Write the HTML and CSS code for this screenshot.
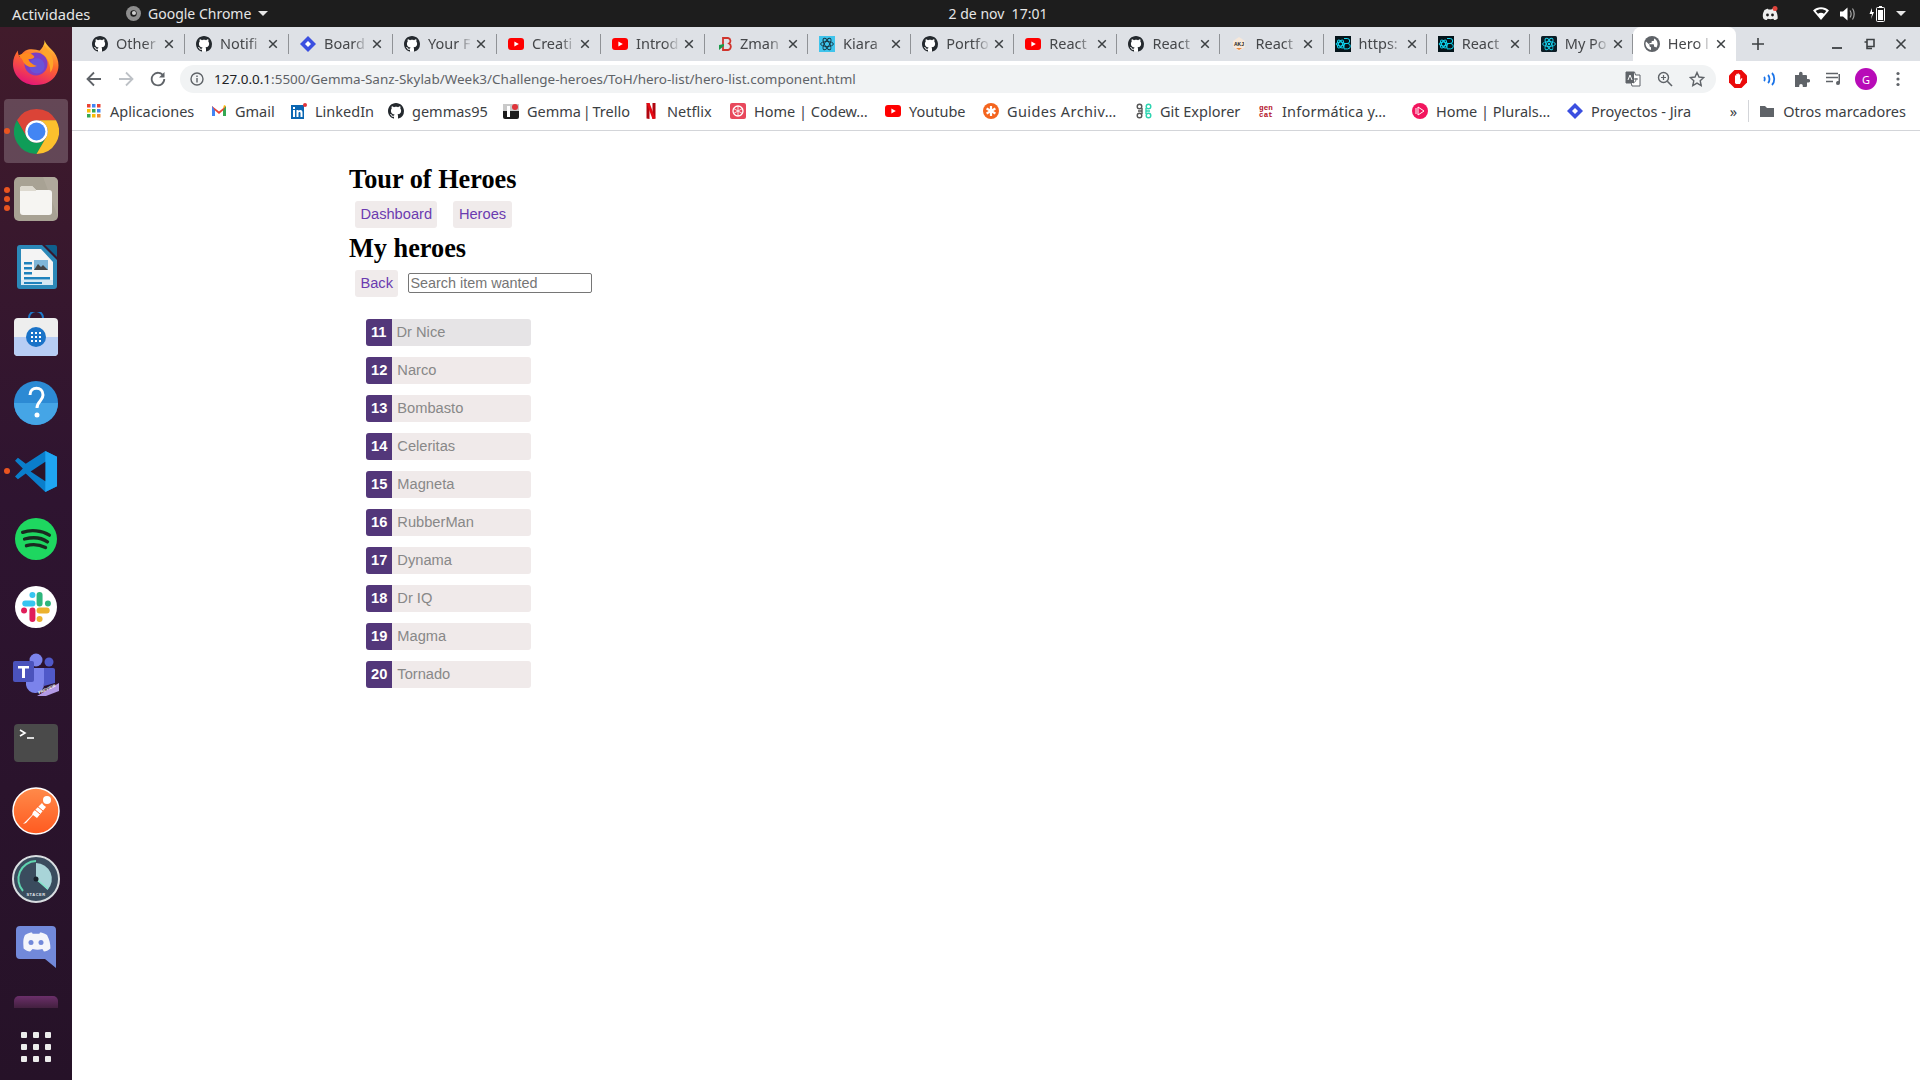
FILE: index.html
```html
<!DOCTYPE html>
<html lang="es">
<head>
    <meta charset="UTF-8">
    <title>Heroes</title>
    <link rel="stylesheet" href="styles.css">
</head>
<body>
    <svg class="defs" width="0" height="0">
        <symbol id="gh" viewBox="0 0 16 16"><circle cx="8" cy="8" r="7.6" fill="#fff"/><path fill="#24292e" d="M8 0C3.58 0 0 3.58 0 8c0 3.54 2.29 6.53 5.47 7.59.4.07.55-.17.55-.38 0-.19-.01-.82-.01-1.49-2.01.37-2.53-.49-2.69-.94-.09-.23-.48-.94-.82-1.13-.28-.15-.68-.52-.01-.53.63-.01 1.08.58 1.23.82.72 1.21 1.87.87 2.33.66.07-.52.28-.87.51-1.07-1.78-.2-3.64-.89-3.64-3.95 0-.87.31-1.59.82-2.15-.08-.2-.36-1.02.08-2.12 0 0 .67-.21 2.2.82.64-.18 1.32-.27 2-.27.68 0 1.36.09 2 .27 1.53-1.04 2.2-.82 2.2-.82.44 1.1.16 1.92.08 2.12.51.56.82 1.27.82 2.15 0 3.07-1.87 3.75-3.65 3.95.29.25.54.73.54 1.48 0 1.07-.01 1.93-.01 2.2 0 .21.15.46.55.38A8.013 8.013 0 0016 8c0-4.42-3.58-8-8-8z"/></symbol>
        <symbol id="yt" viewBox="0 0 16 16"><rect y="2" width="16" height="12" rx="3" fill="#f00"/><path d="M6.4 5.4L10.8 8l-4.4 2.6z" fill="#fff"/></symbol>
        <symbol id="jira" viewBox="0 0 16 16"><path d="M8 0l8 8-8 8-8-8z" fill="#3b4fe0"/><path d="M8 5l3 3-3 3-3-3z" fill="#fff"/></symbol>
        <symbol id="react" viewBox="0 0 16 16"><rect width="16" height="16" rx="1.5" fill="#0b1d26"/><g fill="none" stroke="#17d3ee" stroke-width=".9"><ellipse cx="8" cy="8" rx="6.4" ry="2.5"/><ellipse cx="8" cy="8" rx="6.4" ry="2.5" transform="rotate(60 8 8)"/><ellipse cx="8" cy="8" rx="6.4" ry="2.5" transform="rotate(120 8 8)"/></g><circle cx="8" cy="8" r="1.2" fill="#17d3ee"/></symbol>
        <symbol id="codeb" viewBox="0 0 16 16"><rect width="16" height="16" fill="#04141a"/><g fill="none" stroke="#10d5f0" stroke-width="1"><ellipse cx="5.5" cy="8" rx="4.5" ry="2"/><ellipse cx="5.5" cy="8" rx="4.5" ry="2" transform="rotate(60 5.5 8)"/><ellipse cx="5.5" cy="8" rx="4.5" ry="2" transform="rotate(120 5.5 8)"/><path d="M9 2.5h3.2a2.3 2.3 0 010 5H9m0 0h3.6a2.7 2.7 0 010 5.4H9z"/></g></symbol>
        <symbol id="globe" viewBox="0 0 16 16"><circle cx="8" cy="8" r="8" fill="#5f6368"/><path fill="#fff" d="M2 5.5l3.5 3.2v1.1c0 .8.7 1.4 1.5 1.4v2.9C4 13.400 1.700 11 1.500 8c0-.9.2-1.700.5-2.500zm8-3c2 .7 3.500 2.600 3.500 5.500 0 1.400-.5 2.700-1.400 3.700-.2-.6-.8-1-1.400-1H10V9c0-.4-.3-.7-.7-.7H5.500V7H7c.4 0 .7-.3.7-.7V5h1.500c.5 0 .8-.4.8-.8z"/></symbol>
        <symbol id="close" viewBox="0 0 10 10"><path d="M1.200 1.200l7.600 7.600M8.800 1.200L1.200 8.800" stroke="#3c4043" stroke-width="1.500" fill="none"/></symbol>
    </svg>

    <div class="topbar">
        <span class="top-activities">Actividades</span>
        <span class="top-app">
            <svg width="15" height="15" viewBox="0 0 16 16"><circle cx="8" cy="8" r="8" fill="#8e8e8e"/><circle cx="8" cy="8" r="3.400" fill="#1d1d1d"/><circle cx="8.500" cy="7.500" r="2.200" fill="#cfcfcf"/></svg>
            Google Chrome
            <i class="caret"></i>
        </span>
        <span class="top-clock">2 de nov&nbsp; 17:01</span>
        <span class="top-tray">
            <svg class="tray-discord" width="18" height="16" viewBox="0 0 18 16"><path fill="#eee" d="M3.500 4C5 3 6.500 2.700 7 2.700l.4.800h3.200l.4-.8c.5 0 2 .3 3.500 1.300 1.500 2.500 2.300 5.500 2.200 8.500-1 1-2.500 1.500-3.500 1.600l-.9-1.400c-2 .6-3.600.6-5.600 0l-.9 1.400c-1-.1-2.500-.6-3.500-1.600C1.200 9.500 2 6.500 3.500 4z"/><circle cx="6.500" cy="9" r="1.400" fill="#1d1d1d"/><circle cx="11.500" cy="9" r="1.400" fill="#1d1d1d"/><circle cx="14" cy="2.500" r="2.500" fill="#e0433b"/></svg>
            <svg class="tray-wifi" width="16" height="14" viewBox="0 0 16 14"><path d="M0 3.500C4.500-.7 11.500-.7 16 3.500L8 13z" fill="#fff"/><path d="M2.700 4C5.700 1.700 10.300 1.700 13.300 4L11 6.700C9.200 5.400 6.800 5.400 5 6.700z" fill="#1d1d1d"/></svg>
            <svg class="tray-sound" width="16" height="14" viewBox="0 0 16 14"><path d="M0 4.500h3L7.500.5v13L3 9.500H0z" fill="#fff"/><path d="M10 3.500c1.300 2 1.300 5 0 7M12.500 1.500c2.200 3 2.200 8 0 11" fill="none" stroke="#aaa" stroke-width="1.200"/></svg>
            <svg class="tray-battery" width="18" height="18" viewBox="0 0 18 18"><path d="M3 3L0.500 9H3l-1 5 3-7H3z" fill="#fff"/><rect x="7.500" y="2.500" width="8" height="14" rx="1" fill="none" stroke="#fff"/><rect x="10" y="1" width="3" height="1.500" fill="#fff"/><rect x="9" y="5" width="5" height="10" fill="#fff"/></svg>
            <i class="caret"></i>
        </span>
    </div>

    <div class="desktop">
        <nav class="dock">
            <div class="dock-item">
                <svg width="46" height="46" viewBox="0 0 48 48">
                    <defs>
                        <linearGradient id="ffx" x1="0.700" y1="0" x2="0.300" y2="1"><stop offset="0" stop-color="#ffd23a"/><stop offset=".45" stop-color="#ff6a2b"/><stop offset="1" stop-color="#e3127a"/></linearGradient>
                    </defs>
                    <path fill="url(#ffx)" d="M33 0c1 5 6 8 10 13 5 7 6 16 2 23-4 7-11 11-21 11C10 47 0 37 0 25c0-5 2-10 5-14 0 3 1 5 2 7 2-4 5-7 9-8 6-1 9 1 12 1 3-3 5-6 5-11z"/>
                    <circle cx="24" cy="25" r="12" fill="#7c3fc4"/>
                    <circle cx="25" cy="27" r="8" fill="#6a53d8"/>
                    <path fill="#ff8a1f" d="M6 16c5-3 12-4 16 1 1 2-3 3-6 3 1 3 5 6 9 7-6 3-13 0-15-6-1-2-3-3-4-5z"/>
                    <path fill="#ffa52a" d="M32 5c4 5 10 10 10 19 0 4-1 7-3 10 0-8-2-16-9-20 2-3 2-6 2-9z"/>
                </svg>
            </div>
            <div class="dock-item is-active">
                <i class="dots"><b></b></i>
                <svg width="45" height="45" viewBox="0 0 48 48">
                    <path fill="#db4437" d="M24 0A24 24 0 0 0 3.200 12L13.600 30A12 12 0 0 1 24 12H44.800A24 24 0 0 0 24 0z"/>
                    <path fill="#0f9d58" d="M3.200 12A24 24 0 0 0 24 48L34.400 30A12 12 0 0 1 13.600 30z"/>
                    <path fill="#fbc02d" d="M44.800 12H24A12 12 0 0 1 34.400 30L24 48A24 24 0 0 0 44.800 12z"/>
                    <circle cx="24" cy="24" r="12" fill="#fff"/>
                    <circle cx="24" cy="24" r="9.500" fill="#4285f4"/>
                </svg>
            </div>
            <div class="dock-item">
                <i class="dots"><b></b><b></b><b></b></i>
                <svg width="44" height="44" viewBox="0 0 44 44">
                    <rect width="44" height="44" rx="5" fill="#a8a294"/>
                    <path d="M29 0h10a5 5 0 015 5v35z" fill="#b3ad9f" opacity=".7"/>
                    <path d="M6 12a3 3 0 013-3h9l4 4h13a3 3 0 013 3v19a3 3 0 01-3 3H9a3 3 0 01-3-3z" fill="#f6f5f2"/>
                    <path d="M6 14V12a3 3 0 013-3h9l4 4v1z" fill="#ddd9cf"/>
                </svg>
            </div>
            <div class="dock-item">
                <svg width="44" height="46" viewBox="0 0 44 46">
                    <path d="M6 1h22l15 15v26a3 3 0 01-3 3H6a3 3 0 01-3-3V4a3 3 0 013-3z" fill="#2b88b8"/>
                    <path d="M31 1h10a2 2 0 012 2v10z" fill="#0f5f8c"/>
                    <path d="M7 5h20l12 13v23H7z" fill="#f4f4f4"/>
                    <path d="M7 36h32v5H7z" fill="#bfe0f2" opacity=".6"/>
                    <path d="M10 18h8v2.500h-8zm0 5h8v2.500h-8zm0 5h8v2.500h-8zm0 5h26v2.500H10zm0 5h18v2h-18z" fill="#1f82bd"/>
                    <rect x="20" y="16" width="14" height="10" fill="#7fb6d8"/>
                    <path d="M20 26l4-6 3 3 2-2 5 5z" fill="#444"/>
                </svg>
            </div>
            <div class="dock-item">
                <svg width="44" height="46" viewBox="0 0 44 46">
                    <path d="M15 9V6a7 7 0 0114 0v3" fill="none" stroke="#1d79c9" stroke-width="2"/>
                    <rect y="6" width="44" height="38" rx="4" fill="#eeeeee"/>
                    <path d="M0 25h44v15a4 4 0 01-4 4H4a4 4 0 01-4-4z" fill="#b7cdf4"/>
                    <circle cx="22" cy="25" r="10" fill="#1a73c8"/>
                    <path d="M17 20h2v2h-2zm4 0h2v2h-2zm4 0h2v2h-2zm-8 4h2v2h-2zm4 0h2v2h-2zm4 0h2v2h-2zm-8 4h2v2h-2zm4 0h2v2h-2zm4 0h2v2h-2z" fill="#fff"/>
                </svg>
            </div>
            <div class="dock-item">
                <svg width="44" height="44" viewBox="0 0 44 44">
                    <circle cx="22" cy="22" r="22" fill="#2c8ad4"/>
                    <path d="M0 22h44a22 22 0 01-44 0z" fill="#45a5e6"/>
                    <path d="M16 14c0-9 13-9 13 0 0 6-6 6-6 13" fill="none" stroke="#fff" stroke-width="3"/>
                    <circle cx="23" cy="34" r="2.500" fill="#fff"/>
                </svg>
            </div>
            <div class="dock-item">
                <i class="dots"><b></b></i>
                <svg width="43" height="43" viewBox="0 0 44 44">
                    <path d="M31 1l12 6v30l-12 6-20-19-8 6-3-3 8-8-8-8 3-3 8 6z" fill="#0a7ecb"/>
                    <path d="M31 1l12 6v30l-12 6z" fill="#1fa5f2"/>
                    <path d="M31 12L16 22l15 10z" fill="#2c1428"/>
                </svg>
            </div>
            <div class="dock-item">
                <svg width="42" height="42" viewBox="0 0 44 44">
                    <circle cx="22" cy="22" r="22" fill="#1ed760"/>
                    <path d="M8 15c9-3 20-2 28 3M10 22c8-2 17-2 24 3M12 29c7-2 14-1 20 2" fill="none" stroke="#1a2a20" stroke-width="3.500" stroke-linecap="round"/>
                </svg>
            </div>
            <div class="dock-item">
                <svg width="42" height="42" viewBox="0 0 44 44">
                    <circle cx="22" cy="22" r="22" fill="#fff"/>
                    <g fill="none" stroke-width="5" stroke-linecap="round" transform="translate(-5.500 -5.500) scale(1.250)">
                        <path d="M13 19h6" stroke="#36c5f0"/><path d="M19 12v0" stroke="#36c5f0"/>
                        <path d="M25 12v7" stroke="#2eb67d"/><path d="M32 19v0" stroke="#2eb67d"/>
                        <path d="M25 25h6" stroke="#ecb22e"/><path d="M25 32v0" stroke="#ecb22e"/>
                        <path d="M19 25v7" stroke="#e01e5a"/><path d="M12 25v0" stroke="#e01e5a"/>
                    </g>
                </svg>
            </div>
            <div class="dock-item">
                <svg width="46" height="44" viewBox="0 0 46 44">
                    <circle cx="23" cy="7" r="6.500" fill="#7b83eb"/>
                    <circle cx="36" cy="9" r="4.500" fill="#5059c9"/>
                    <path d="M31 15h9a2 2 0 012 2v13l-11 3z" fill="#5059c9"/>
                    <path d="M13 15h18v15a9 9 0 01-18 2z" fill="#7b83eb"/>
                    <rect y="8" width="21" height="21" rx="2" fill="#4b53bc"/>
                    <path d="M5 13h11v2.500h-4V25H9v-9.500H5z" fill="#fff"/>
                    <path d="M46 30v8L33 43H24z" fill="#b39ae6"/>
                    <text x="26" y="41" transform="rotate(-24 26 41)" class="dock-tiny">PREVIEW</text>
                </svg>
            </div>
            <div class="dock-item">
                <svg width="44" height="38" viewBox="0 0 44 38">
                    <rect width="44" height="38" rx="4" fill="#4a4a4a"/>
                    <path d="M6 6l5 3-5 3" fill="none" stroke="#fff" stroke-width="1.600"/>
                    <path d="M13 14h7" stroke="#fff" stroke-width="1.600"/>
                </svg>
            </div>
            <div class="dock-item">
                <svg width="48" height="48" viewBox="0 0 48 48">
                    <defs><linearGradient id="pm" x1="0" y1="0" x2="0" y2="1"><stop offset="0" stop-color="#ff8a4a"/><stop offset="1" stop-color="#ff5a20"/></linearGradient></defs>
                    <circle cx="24" cy="24" r="23" fill="url(#pm)" stroke="#fff" stroke-width="1.500"/>
                    <path d="M11 37l3-1 7-8 4 3 9-11c-1-1-3-2-4-4l-9 9-1 3-9 9z" fill="#fff"/>
                    <path d="M22 22l6 5M25 19l6 5" stroke="#ff6a30" stroke-width="1"/>
                    <circle cx="35" cy="13" r="4" fill="#fff"/>
                </svg>
            </div>
            <div class="dock-item">
                <svg width="48" height="48" viewBox="0 0 48 48">
                    <circle cx="24" cy="24" r="23" fill="#3a4c5e" stroke="#d8dde0" stroke-width="2"/>
                    <path d="M24 8a16 16 0 0111.500 27L24 24z" fill="#a8d4d8"/>
                    <path d="M11 36A18 18 0 0 1 24 6" fill="none" stroke="#5fd4b0" stroke-width="2"/>
                    <path d="M24 24l12 10" stroke="#7fe6c8" stroke-width="1.500"/>
                    <circle cx="24" cy="24" r="2.500" fill="#17202a"/>
                    <text x="24" y="41" class="dock-tiny dock-tiny-mid">STACER</text>
                </svg>
            </div>
            <div class="dock-item">
                <svg width="40" height="42" viewBox="0 0 40 42">
                    <path d="M4 0h32a4 4 0 014 4v38l-11-9H4a4 4 0 01-4-4V4a4 4 0 014-4z" fill="#7289da"/>
                    <path d="M9 9c3-2 6-2.500 7-2.500l.6 1.200h6.800l.6-1.200c1 0 4 .5 7 2.500 2.500 4.500 3.500 9 3.400 13.500-2 2-4.500 3-6.500 3l-1.500-2.500c-3.500 1-6.300 1-9.800 0L14.100 25.500c-2 0-4.500-1-6.500-3C7.500 18 6.500 13.500 9 9z" fill="#f4f5fb"/>
                    <circle cx="15" cy="16.500" r="2.500" fill="#7289da"/><circle cx="25" cy="16.500" r="2.500" fill="#7289da"/>
                </svg>
            </div>
            <div class="dock-cut"></div>
            <div class="dock-grid">
                <b></b><b></b><b></b><b></b><b></b><b></b><b></b><b></b><b></b>
            </div>
        </nav>

        <div class="window">
            <div class="tabstrip">
                <div class="tab"><svg class="fav"><use href="#gh"/></svg><span class="tab-label">Other</span><svg class="tab-x"><use href="#close"/></svg></div>
                <div class="tab"><svg class="fav"><use href="#gh"/></svg><span class="tab-label">Notifi</span><svg class="tab-x"><use href="#close"/></svg></div>
                <div class="tab"><svg class="fav"><use href="#jira"/></svg><span class="tab-label">Board</span><svg class="tab-x"><use href="#close"/></svg></div>
                <div class="tab"><svg class="fav"><use href="#gh"/></svg><span class="tab-label">Your F</span><svg class="tab-x"><use href="#close"/></svg></div>
                <div class="tab"><svg class="fav"><use href="#yt"/></svg><span class="tab-label">Creati</span><svg class="tab-x"><use href="#close"/></svg></div>
                <div class="tab"><svg class="fav"><use href="#yt"/></svg><span class="tab-label">Introd</span><svg class="tab-x"><use href="#close"/></svg></div>
                <div class="tab"><svg class="fav" viewBox="0 0 16 16"><path d="M7 2h5a3 3 0 011 5.500A3.500 3.500 0 0112 14H7z" fill="none" stroke="#d0342c" stroke-width="1.800"/><path d="M3 9l5-1v2l-5 4z" fill="#1a9a4a"/></svg><span class="tab-label">Zman</span><svg class="tab-x"><use href="#close"/></svg></div>
                <div class="tab"><svg class="fav" viewBox="0 0 16 16"><rect width="16" height="16" fill="#3fc4ec"/><g fill="none" stroke="#17333f" stroke-width=".9"><ellipse cx="8" cy="8" rx="6.400" ry="2.500"/><ellipse cx="8" cy="8" rx="6.400" ry="2.500" transform="rotate(60 8 8)"/><ellipse cx="8" cy="8" rx="6.400" ry="2.500" transform="rotate(120 8 8)"/></g></svg><span class="tab-label">Kiara</span><svg class="tab-x"><use href="#close"/></svg></div>
                <div class="tab"><svg class="fav"><use href="#gh"/></svg><span class="tab-label">Portfo</span><svg class="tab-x"><use href="#close"/></svg></div>
                <div class="tab"><svg class="fav"><use href="#yt"/></svg><span class="tab-label">React</span><svg class="tab-x"><use href="#close"/></svg></div>
                <div class="tab"><svg class="fav"><use href="#gh"/></svg><span class="tab-label">React</span><svg class="tab-x"><use href="#close"/></svg></div>
                <div class="tab"><svg class="fav" viewBox="0 0 16 16"><path d="M8 1l6 4v6l-6 4-6-4V5z" fill="#f7e8da"/><path d="M5 12l3 2 3-2z" fill="#e8873c"/><text x="8" y="9.500" class="fav-akj">AKJ</text></svg><span class="tab-label">React</span><svg class="tab-x"><use href="#close"/></svg></div>
                <div class="tab"><svg class="fav"><use href="#codeb"/></svg><span class="tab-label">https:</span><svg class="tab-x"><use href="#close"/></svg></div>
                <div class="tab"><svg class="fav"><use href="#codeb"/></svg><span class="tab-label">React</span><svg class="tab-x"><use href="#close"/></svg></div>
                <div class="tab"><svg class="fav"><use href="#react"/></svg><span class="tab-label">My Po</span><svg class="tab-x"><use href="#close"/></svg></div>
                <div class="tab is-current"><svg class="fav"><use href="#globe"/></svg><span class="tab-label">Hero l</span><svg class="tab-x"><use href="#close"/></svg></div>
                <svg class="tab-new" width="14" height="14" viewBox="0 0 14 14"><path d="M7 1v12M1 7h12" stroke="#3c4043" stroke-width="1.600"/></svg>
                <div class="win-controls">
                    <svg width="12" height="12" viewBox="0 0 12 12"><path d="M1 10h10" stroke="#3c4043" stroke-width="1.800"/></svg>
                    <svg width="12" height="12" viewBox="0 0 12 12"><path d="M4 1.500h7v7H4z M1.500 4H4v6.500h5" fill="none" stroke="#3c4043" stroke-width="1.600"/></svg>
                    <svg width="12" height="12" viewBox="0 0 12 12"><path d="M1.500 1.500l9 9M10.500 1.500l-9 9" stroke="#3c4043" stroke-width="1.600"/></svg>
                </div>
            </div>

            <div class="toolbar">
                <svg class="tool-btn" width="16" height="16" viewBox="0 0 16 16"><path d="M15 8H2M8 1.500L1.500 8 8 14.500" fill="none" stroke="#5f6368" stroke-width="1.800"/></svg>
                <svg class="tool-btn" width="16" height="16" viewBox="0 0 16 16"><path d="M1 8h13M8 1.500L14.500 8 8 14.500" fill="none" stroke="#bdc1c6" stroke-width="1.800"/></svg>
                <svg class="tool-btn" width="16" height="16" viewBox="0 0 16 16"><path d="M13.500 5A6.300 6.300 0 1014.300 8" fill="none" stroke="#5f6368" stroke-width="1.800"/><path d="M14.500 1v5.500H9z" fill="#5f6368"/></svg>
                <div class="omnibox">
                    <svg width="14" height="14" viewBox="0 0 14 14"><circle cx="7" cy="7" r="6" fill="none" stroke="#5f6368" stroke-width="1.400"/><path d="M6.300 6h1.400v4.500H6.300zM6.300 3.500h1.400v1.400H6.300z" fill="#5f6368"/></svg>
                    <span class="url"><b>127.0.0.1</b>:5500/Gemma-Sanz-Skylab/Week3/Challenge-heroes/ToH/hero-list/hero-list.component.html</span>
                    <span class="omni-actions">
                        <svg width="16" height="16" viewBox="0 0 16 16"><path d="M1 1h8.500l1 3H15v11H7l-.8-3H1z" fill="#fff" stroke="#5f6368"/><path d="M1 1h8v11H1z" fill="#5f6368"/><path d="M3 9l2-5 2 5" fill="none" stroke="#fff"/><path d="M9 8h4M11 7v1c0 2-1 3-2.500 4" fill="none" stroke="#5f6368"/></svg>
                        <svg width="16" height="16" viewBox="0 0 16 16"><circle cx="6.500" cy="6.500" r="5" fill="none" stroke="#5f6368" stroke-width="1.400"/><path d="M10.300 10.300L15 15" stroke="#5f6368" stroke-width="1.600"/><path d="M4 6.500h5M6.500 4v5" stroke="#5f6368" stroke-width="1.200"/></svg>
                        <svg width="16" height="16" viewBox="0 0 16 16"><path d="M8 1.500l2 4.500 4.800.5-3.600 3.200 1 4.800L8 12.100l-4.200 2.400 1-4.800L1.200 6.500 6 6z" fill="none" stroke="#5f6368" stroke-width="1.400"/></svg>
                    </span>
                </div>
                <div class="ext-row">
                    <svg width="18" height="18" viewBox="0 0 18 18"><path d="M5.500 0h7L18 5.500v7L12.500 18h-7L0 12.500v-7z" fill="#ea0a0a"/><path d="M6 13V6c0-1 1.200-1 1.200 0V4.500c0-1 1.300-1 1.300 0V4c0-1 1.400-1 1.400 0v1c0-1 1.300-1 1.300 0v5l1-1.500c.7-.8 1.500 0 1 .8L11 14H7z" fill="#fff"/></svg>
                    <svg width="16" height="16" viewBox="0 0 16 16"><g fill="none" stroke="#1a73e8" stroke-width="1.800"><path d="M2 6c1 1 1 3 0 4"/><path d="M6 4c2 2 2 6 0 8"/><path d="M10 2c3 3 3 9 0 12"/></g></svg>
                    <svg width="16" height="16" viewBox="0 0 16 16"><path d="M1 4h4V2.500a1.800 1.800 0 013.600 0V4H12a1 1 0 011 1v3h1.300a1.800 1.800 0 010 3.600H13V15a1 1 0 01-1 1H8.800v-1.300a1.800 1.800 0 00-3.600 0V16H1z" fill="#5f6368"/></svg>
                    <svg width="18" height="16" viewBox="0 0 18 16"><path d="M1 2.500h12M1 6.500h12M1 10.500h7" stroke="#5f6368" stroke-width="1.500"/><path d="M15 3v9a2 2 0 11-1.500-1.900V3z" fill="#5f6368"/></svg>
                    <span class="avatar">G</span>
                    <svg width="16" height="16" viewBox="0 0 16 16"><circle cx="8" cy="2.500" r="1.600" fill="#5f6368"/><circle cx="8" cy="8" r="1.600" fill="#5f6368"/><circle cx="8" cy="13.500" r="1.600" fill="#5f6368"/></svg>
                </div>
            </div>

            <div class="bookmarks">
                <a class="bm"><svg class="fav" viewBox="0 0 16 16"><g><rect x="1" y="1" width="3.500" height="3.500" fill="#ea4335"/><rect x="6" y="1" width="3.500" height="3.500" fill="#4285f4"/><rect x="11" y="1" width="3.500" height="3.500" fill="#ea4335"/><rect x="1" y="6" width="3.500" height="3.500" fill="#fbbc05"/><rect x="6" y="6" width="3.500" height="3.500" fill="#34a853"/><rect x="11" y="6" width="3.500" height="3.500" fill="#4285f4"/><rect x="1" y="11" width="3.500" height="3.500" fill="#34a853"/><rect x="6" y="11" width="3.500" height="3.500" fill="#fbbc05"/><rect x="11" y="11" width="3.500" height="3.500" fill="#ea8a35"/></g></svg>Aplicaciones</a>
                <a class="bm"><svg class="fav" viewBox="0 0 16 16"><path d="M1 3l7 5.500L15 3v10h-3V7.500L8 11 4 7.500V13H1z" fill="#ea4335"/><path d="M1 3v10h3V7.500z" fill="#4285f4"/><path d="M15 3v10h-3V7.500z" fill="#34a853"/><path d="M13 2l2 1-3 2.500z" fill="#fbbc05"/></svg>Gmail</a>
                <a class="bm"><svg class="fav" viewBox="0 0 16 16"><rect y="2" width="13" height="14" fill="#0a66b2"/><path d="M2 7h2v7H2zM2 4h2v2H2zM5.500 7h2v1c1-1.500 4-1.500 4 1.500V14h-2v-4c0-1.500-2-1.500-2 0v4h-2z" fill="#fff"/><circle cx="14" cy="2" r="2" fill="#e0343a"/></svg>LinkedIn</a>
                <a class="bm"><svg class="fav"><use href="#gh"/></svg>gemmas95</a>
                <a class="bm"><svg class="fav" viewBox="0 0 16 16"><rect y="1" width="16" height="15" rx="2" fill="#1b1b1b"/><rect y="1" width="16" height="7" fill="#c9c9c9"/><rect x="4" y="3" width="3" height="11" fill="#fff"/><circle cx="12" cy="4" r="3" fill="#e0343a"/></svg>Gemma | Trello</a>
                <a class="bm"><svg class="fav" viewBox="0 0 16 16"><path d="M3.500 0h3v16l-3-.4z" fill="#b1060f"/><path d="M9.500 0h3v15.600l-3 .4z" fill="#b1060f"/><path d="M3.500 0h3l6 15.600-3 .4z" fill="#e50914"/></svg>Netflix</a>
                <a class="bm"><svg class="fav" viewBox="0 0 16 16"><rect width="16" height="16" rx="2" fill="#e8485c"/><circle cx="8" cy="8" r="5" fill="none" stroke="#fff" stroke-width="1.300"/><path d="M8 3v10M3.500 5.500l9 5M12.500 5.500l-9 5" stroke="#fff" stroke-width=".8"/></svg>Home | Codew…</a>
                <a class="bm"><svg class="fav"><use href="#yt"/></svg>Youtube</a>
                <a class="bm"><svg class="fav" viewBox="0 0 16 16"><circle cx="8" cy="8" r="8" fill="#f4651f"/><path d="M8 3v10M3.600 5.500l8.800 5M12.400 5.500l-8.800 5" stroke="#fff" stroke-width="2.200"/></svg>Guides Archiv…</a>
                <a class="bm"><svg class="fav" viewBox="0 0 16 16"><g fill="none" stroke-width="1.400"><circle cx="3.500" cy="3.500" r="2.300" stroke="#555"/><circle cx="3.500" cy="12.500" r="2.300" stroke="#555"/><circle cx="12.500" cy="3.500" r="2.300" stroke="#2bd4b0"/><circle cx="12.500" cy="12.500" r="2.300" stroke="#2bd4b0"/><path d="M6 8H2M6 5v6" stroke="#555"/><path d="M10 8h4M10 5v6" stroke="#2bd4b0"/></g></svg>Git Explorer</a>
                <a class="bm"><svg class="fav" viewBox="0 0 16 16"><text x="8" y="7" class="fav-gen">gen</text><text x="8" y="14" class="fav-gen">cat</text></svg>Informática y…</a>
                <a class="bm"><svg class="fav" viewBox="0 0 16 16"><circle cx="8" cy="8" r="8" fill="#f2155e"/><path d="M6 4v8l6-4z" fill="none" stroke="#fff"/><path d="M4 5v6" stroke="#fff"/></svg>Home | Plurals…</a>
                <a class="bm"><svg class="fav"><use href="#jira"/></svg>Proyectos - Jira</a>
                <span class="bm-more">»</span>
                <a class="bm bm-other"><svg class="fav" viewBox="0 0 16 16"><path d="M1 3h5l2 2h7v9H1z" fill="#5f6368"/></svg>Otros marcadores</a>
            </div>

            <main class="page">
                <h1>Tour of Heroes</h1>
                <div class="links">
                    <a class="link-btn">Dashboard</a>
                    <a class="link-btn">Heroes</a>
                </div>
                <h2>My heroes</h2>
                <div class="links links-search">
                    <a class="link-btn">Back</a>
                    <input type="text" class="search" placeholder="Search item wanted">
                </div>
                <ul class="heroes">
                    <li class="is-hover"><span class="badge">11</span>Dr Nice</li>
                    <li><span class="badge">12</span>Narco</li>
                    <li><span class="badge">13</span>Bombasto</li>
                    <li><span class="badge">14</span>Celeritas</li>
                    <li><span class="badge">15</span>Magneta</li>
                    <li><span class="badge">16</span>RubberMan</li>
                    <li><span class="badge">17</span>Dynama</li>
                    <li><span class="badge">18</span>Dr IQ</li>
                    <li><span class="badge">19</span>Magma</li>
                    <li><span class="badge">20</span>Tornado</li>
                </ul>
            </main>
        </div>
    </div>
</body>
</html>
```

FILE: styles.css
```css
* {
    box-sizing: border-box;
}
html, body {
    margin: 0;
    height: 1080px;
    overflow: hidden;
}
body {
    font-family: "Noto Sans", sans-serif;
    background-color: #fff;
}
.defs {
    position: absolute;
}

/* ubuntu top bar */
.topbar {
    display: flex;
    align-items: center;
    height: 27px;
    padding-left: 12px;
    background-color: #1d1d1d;
    color: #e6e6e6;
    font-size: 14px;
}
.top-activities {
    width: 114px;
    font-size: 14.7px;
}
.top-app {
    display: flex;
    align-items: center;
    gap: 7px;
    width: 782px;
}
.top-clock {
    width: 180px;
    text-align: center;
}
.top-tray {
    display: flex;
    align-items: center;
    margin-left: auto;
    padding-right: 14px;
}
.tray-discord {
    margin-right: 34px;
}
.tray-wifi {
    margin-right: 11px;
}
.tray-sound {
    margin-right: 13px;
}
.tray-battery {
    margin-right: 9px;
}
.caret {
    width: 0;
    height: 0;
    border-left: 5px solid transparent;
    border-right: 5px solid transparent;
    border-top: 5px solid #e6e6e6;
}

.desktop {
    display: flex;
    height: 1053px;
}

/* dock */
.dock {
    display: flex;
    flex-direction: column;
    align-items: center;
    flex: none;
    width: 72px;
    padding-top: 2px;
    background: linear-gradient(#411b2b, #2e1430 45%, #261228);
    overflow: hidden;
}
.dock-item {
    position: relative;
    display: flex;
    align-items: center;
    justify-content: center;
    flex: none;
    width: 64px;
    height: 68px;
}
.dock-item.is-active {
    height: 64px;
    margin: 2px 0;
    background-color: rgba(255, 255, 255, 0.2);
    border-radius: 4px;
}
.dock-tiny {
    fill: #fff;
    font-family: "Liberation Sans", sans-serif;
    font-size: 4px;
    font-weight: 700;
}
.dock-tiny-mid {
    text-anchor: middle;
    fill: #e2e6ea;
    letter-spacing: .5px;
}
.dots {
    position: absolute;
    left: 0;
    top: 50%;
    display: flex;
    flex-direction: column;
    gap: 3px;
    transform: translateY(-50%);
}
.dots b {
    width: 6px;
    height: 6px;
    margin-left: 0;
    border-radius: 50%;
    background-color: #e95420;
}
.dock-cut {
    flex: none;
    width: 44px;
    height: 12px;
    margin-top: 15px;
    border-radius: 5px 5px 0 0;
    background: linear-gradient(#6b2f6a, #43203f);
}
.dock-grid {
    display: grid;
    grid-template-columns: repeat(3, 6px);
    gap: 6px;
    justify-content: center;
    margin-top: 24px;
    width: 44px;
}
.dock-grid b {
    width: 6px;
    height: 6px;
    border-radius: 1px;
    background-color: #ececec;
}

/* chrome */
.window {
    display: flex;
    flex-direction: column;
    flex: 1;
    min-width: 0;
}
.tabstrip {
    display: flex;
    align-items: flex-end;
    height: 34px;
    padding-left: 9px;
    background-color: #dee1e6;
}
.tab {
    display: flex;
    align-items: center;
    flex: none;
    width: 103.1px;
    height: 34px;
    padding-left: 11px;
    color: #45474a;
    font-size: 14.5px;
    position: relative;
}
.tab:nth-child(-n+6) {
    width: 104px;
}
.tab::after {
    content: "";
    position: absolute;
    right: 0;
    top: 7px;
    height: 20px;
    border-right: 1px solid #8f9296;
}
.tab.is-current {
    background-color: #fff;
    border-radius: 8px 8px 0 0;
}
.tab:nth-last-of-type(2)::after, .tab.is-current::after {
    display: none;
}
.fav {
    flex: none;
    width: 16px;
    height: 16px;
}
.fav-akj {
    fill: #222;
    font-family: "Liberation Sans", sans-serif;
    font-size: 5px;
    font-weight: 700;
    text-anchor: middle;
}
.fav-gen {
    fill: #b3122a;
    font-family: "Liberation Mono", monospace;
    font-size: 7.5px;
    font-weight: 700;
    text-anchor: middle;
}
.tab-label {
    width: 48px;
    margin-left: 8px;
    margin-bottom: 2px;
    overflow: hidden;
    white-space: nowrap;
    -webkit-mask-image: linear-gradient(to right, #000 60%, transparent 92%);
    mask-image: linear-gradient(to right, #000 60%, transparent 92%);
}
.tab-x {
    flex: none;
    width: 10px;
    height: 10px;
    margin-left: 0;
}
.tab-new {
    align-self: center;
    margin-left: 15px;
}
.win-controls {
    display: flex;
    align-self: center;
    gap: 20px;
    margin-left: auto;
    padding-right: 13px;
}

.toolbar {
    display: flex;
    align-items: center;
    height: 36px;
    padding-left: 14px;
    background-color: #fff;
}
.tool-btn {
    flex: none;
    margin-right: 16px;
}
.omnibox {
    display: flex;
    align-items: center;
    flex: none;
    width: 1536px;
    height: 28px;
    margin-left: -2px;
    padding: 0 10px;
    border-radius: 14px;
    background-color: #f1f3f4;
}
.url {
    margin-left: 10px;
    color: #5f6368;
    font-size: 13.47px;
    white-space: nowrap;
}
.url b {
    color: #202124;
    font-weight: 400;
}
.omni-actions {
    display: flex;
    align-items: center;
    gap: 16px;
    margin-left: auto;
    padding-right: 1px;
}
.ext-row {
    display: grid;
    grid-template-columns: repeat(6, 32px);
    align-items: center;
    justify-items: center;
    padding-left: 6px;
}
.avatar {
    display: flex;
    align-items: center;
    justify-content: center;
    width: 22px;
    height: 22px;
    border-radius: 50%;
    background-color: #b80bb8;
    color: #fff;
    font-size: 11px;
}

.bookmarks {
    display: flex;
    align-items: center;
    height: 34px;
    padding-left: 14px;
    padding-bottom: 5px;
    border-bottom: 1px solid #d3d5d9;
    background-color: #fff;
    color: #3c4043;
    font-size: 14.5px;
    white-space: nowrap;
}
.bm {
    display: flex;
    align-items: center;
    flex: none;
    gap: 8px;
}
/* bookmark widths, ubuntu font is not here so natural widths drift */
.bm:nth-child(1) { width: 125px; }
.bm:nth-child(2) { width: 80px; }
.bm:nth-child(3) { width: 97px; }
.bm:nth-child(4) { width: 115px; }
.bm:nth-child(5) { width: 140px; word-spacing: -2px; }
.bm:nth-child(6) { width: 87px; }
.bm:nth-child(7) { width: 155px; }
.bm:nth-child(8) { width: 98px; }
.bm:nth-child(9) { width: 153px; letter-spacing: .4px; }
.bm:nth-child(10) { width: 122px; }
.bm:nth-child(11) { width: 154px; letter-spacing: .2px; }
.bm:nth-child(12) { width: 155px; }
.bm-more {
    margin-left: auto;
    margin-right: 10px;
    padding-right: 11px;
    border-right: 1px solid #d3d5d9;
    line-height: 22px;
}
.bm-other {
    margin-right: 14px;
}

/* the page itself */
.page {
    padding: 33px 0 0 277px;
    font-family: "Liberation Sans", Arial, sans-serif;
    font-size: 14.67px;
}
.page h1, .page h2 {
    margin: 0;
    height: 32px;
    font-family: "Liberation Serif", "Times New Roman", serif;
    font-size: 26.3px;
    line-height: 32px;
    font-weight: 700;
    color: #000;
}
.links {
    display: flex;
    align-items: center;
    gap: 16px;
    height: 27px;
    margin: 5px 0 5px 6px;
}
.links-search {
    gap: 10px;
}
.link-btn {
    padding: 0 5.4px;
    line-height: 27px;
    border-radius: 3px;
    background-color: #f0ebeb;
    color: #6b3bb0;
}
.search {
    width: 184px;
    height: 20px;
    margin-top: -1px;
    padding: 0 1px;
    border: 1px solid #767676;
    border-radius: 2px;
    font-family: inherit;
    font-size: 14.4px;
}
.search::placeholder {
    color: #757575;
}
.heroes {
    display: flex;
    flex-direction: column;
    gap: 11px;
    width: 165px;
    margin: 22px 0 0 17px;
    padding: 0;
    list-style: none;
}
.heroes li {
    height: 27px;
    line-height: 27px;
    border-radius: 3px;
    background-color: #f0eaea;
    color: #888;
    overflow: hidden;
}
.heroes li.is-hover {
    background-color: #e6e4e6;
}
.badge {
    display: inline-block;
    height: 27px;
    margin-right: 5px;
    padding: 0 5px;
    background-color: #53377a;
    color: #fff;
    font-weight: 700;
}
```
